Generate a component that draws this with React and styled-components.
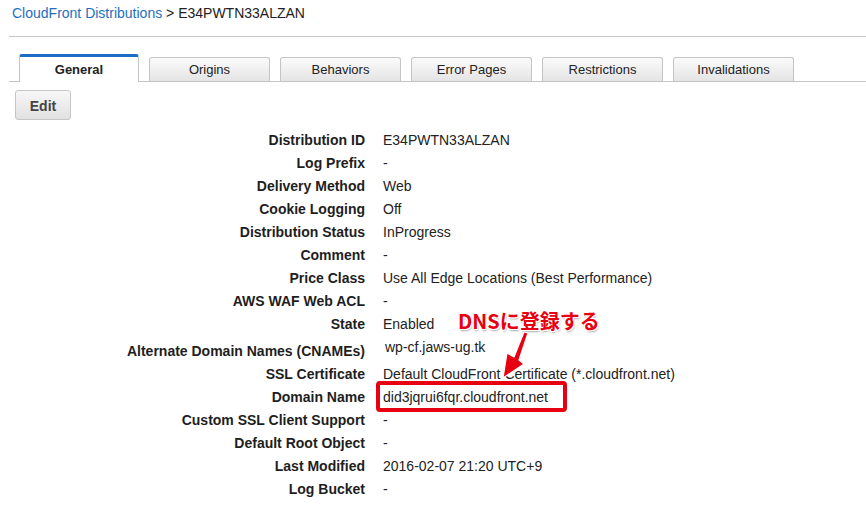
import React from "react";
import styled, { createGlobalStyle } from "styled-components";

const Global = createGlobalStyle`
  html, body { margin: 0; padding: 0; background: #fff; }
  body { font-family: "Liberation Sans", Arial, sans-serif; color: #222; }
`;

const Page = styled.div`
  position: relative;
  width: 866px;
  height: 509px;
  overflow: hidden;
`;

const Header = styled.div`
  margin-left: 9px;
  box-sizing: border-box;
  padding: 4px 0 0 3px;
  border-bottom: 1px solid #c8c8c8;
  font-size: 14px;
  line-height: 18px;
  height: 37px;
`;

const Crumb = styled.a`
  color: #1f6fc0;
  text-decoration: none;
`;

const TabBar = styled.div`
  margin: 17px 0 0 9px;
  padding-left: 10px;
  display: flex;
  align-items: flex-end;
  gap: 10px;
  height: 27px;
  border-bottom: 1px solid #c4c4c4;
`;

const Tab = styled.div`
  width: 121px;
  box-sizing: border-box;
  font-size: 13px;
  text-align: center;
  color: #222;
  border: 1px solid #c4c4c4;
  border-bottom: none;
  border-radius: 3px 3px 0 0;
  ${(p) =>
    p.$active
      ? `
    height: 28px;
    margin-bottom: -1px;
    background: #fff;
    border-top: 3px solid #1f6cc4;
    font-weight: bold;
    line-height: 26px;
    width: 120px;
  `
      : `
    height: 24px;
    line-height: 23px;
    background: linear-gradient(#fbfbfb, #e4e4e4);
  `}
`;

const EditButton = styled.button`
  display: block;
  margin: 8px 0 0 15px;
  width: 56px;
  height: 30px;
  box-sizing: border-box;
  border: 1px solid #c6c6c6;
  border-radius: 3px;
  background: linear-gradient(#f7f7f7, #e1e1e1);
  font-family: "Liberation Sans", Arial, sans-serif;
  font-size: 14px;
  font-weight: bold;
  color: #444;
  padding: 2px 0 0;
`;

const Details = styled.div`
  margin-top: 8px;
  padding-top: 0.5px;
  display: grid;
  grid-template-columns: 365px 1fr;
  column-gap: 18px;
  font-size: 14px;
`;

const Label = styled.div`
  text-align: right;
  font-weight: bold;
  color: #1e1e1e;
  line-height: 23px;
  height: ${(p) => (p.$tall ? "27px" : "23px")};
  padding-top: ${(p) => (p.$tall ? "4px" : "0")};
  box-sizing: border-box;
  white-space: nowrap;
`;

const Value = styled.div`
  line-height: 23px;
  height: ${(p) => (p.$tall ? "27px" : "23px")};
  padding-left: ${(p) => (p.$tall ? "2px" : "0")};
  color: #222;
  white-space: nowrap;
`;

const Boxed = styled.span`
  position: relative;
  display: inline-block;
  &::after {
    content: "";
    position: absolute;
    left: -7px;
    top: -5px;
    width: 191px;
    height: 31px;
    box-sizing: border-box;
    border: 4px solid #e60012;
    border-radius: 4px;
  }
`;

const Note = styled.div`
  position: absolute;
  left: 458px;
  top: 309px;
  font-family: "Noto Sans CJK JP", sans-serif;
  font-weight: bold;
  font-size: 20px;
  line-height: 24px;
  color: #e60012;
  white-space: nowrap;
  text-shadow: 1px 0 0 #fff, -1px 0 0 #fff, 0 1px 0 #fff, 0 -1px 0 #fff,
    1px 1px 0 #fff, -1px -1px 0 #fff, 1px -1px 0 #fff, -1px 1px 0 #fff,
    1px 2px 2px rgba(0, 0, 0, 0.35);
`;

const Arrow = styled.svg`
  position: absolute;
  left: 495px;
  top: 330px;
  width: 45px;
  height: 60px;
  overflow: visible;
`;

const rows = [
  ["Distribution ID", "E34PWTN33ALZAN"],
  ["Log Prefix", "-"],
  ["Delivery Method", "Web"],
  ["Cookie Logging", "Off"],
  ["Distribution Status", "InProgress"],
  ["Comment", "-"],
  ["Price Class", "Use All Edge Locations (Best Performance)"],
  ["AWS WAF Web ACL", "-"],
  ["State", "Enabled"],
  ["Alternate Domain Names (CNAMEs)", "wp-cf.jaws-ug.tk", "tall"],
  ["SSL Certificate", "Default CloudFront Certificate (*.cloudfront.net)"],
  ["Domain Name", "did3jqrui6fqr.cloudfront.net", "boxed"],
  ["Custom SSL Client Support", "-"],
  ["Default Root Object", "-"],
  ["Last Modified", "2016-02-07 21:20 UTC+9"],
  ["Log Bucket", "-"],
];

const tabs = ["General", "Origins", "Behaviors", "Error Pages", "Restrictions", "Invalidations"];

export default function App() {
  return (
    <Page>
      <Global />
      <Header>
        <Crumb href="#">CloudFront Distributions</Crumb> &gt; E34PWTN33ALZAN
      </Header>
      <TabBar>
        {tabs.map((t, i) => (
          <Tab key={t} $active={i === 0}>
            {t}
          </Tab>
        ))}
      </TabBar>
      <EditButton>Edit</EditButton>
      <Details>
        {rows.map(([label, value, kind]) => (
          <React.Fragment key={label}>
            <Label $tall={kind === "tall"}>{label}</Label>
            <Value $tall={kind === "tall"}>
              {kind === "boxed" ? <Boxed>{value}</Boxed> : value}
            </Value>
          </React.Fragment>
        ))}
      </Details>
      <Note>DNSに登録する</Note>
      <Arrow viewBox="0 0 45 60">
        <polygon
          points="29,2 33,3 24,30 29,34 8,48 12,23 19,27"
          fill="#e60012"
          stroke="#fff"
          strokeWidth="1.2"
          strokeLinejoin="round"
        />
      </Arrow>
    </Page>
  );
}
